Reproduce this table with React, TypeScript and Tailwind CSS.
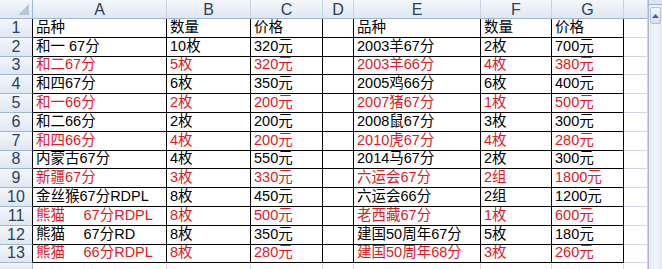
import React from 'react';

type Row = { cells: string[]; red: boolean };

const rows: Row[] = [
  { cells: ['品种', '数量', '价格', '', '品种', '数量', '价格'], red: false },
  { cells: ['和一 67分', '10枚', '320元', '', '2003羊67分', '2枚', '700元'], red: false },
  { cells: ['和二67分', '5枚', '320元', '', '2003羊66分', '4枚', '380元'], red: true },
  { cells: ['和四67分', '6枚', '350元', '', '2005鸡66分', '6枚', '400元'], red: false },
  { cells: ['和一66分', '2枚', '200元', '', '2007猪67分', '1枚', '500元'], red: true },
  { cells: ['和二66分', '2枚', '200元', '', '2008鼠67分', '3枚', '300元'], red: false },
  { cells: ['和四66分', '4枚', '200元', '', '2010虎67分', '4枚', '280元'], red: true },
  { cells: ['内蒙古67分', '4枚', '550元', '', '2014马67分', '2枚', '300元'], red: false },
  { cells: ['新疆67分', '3枚', '330元', '', '六运会67分', '2组', '1800元'], red: true },
  { cells: ['金丝猴67分RDPL', '8枚', '450元', '', '六运会66分', '2组', '1200元'], red: false },
  { cells: ['熊猫\u3000 67分RDPL', '8枚', '500元', '', '老西藏67分', '1枚', '600元'], red: true },
  { cells: ['熊猫\u3000 67分RD', '8枚', '350元', '', '建国50周年67分', '5枚', '180元'], red: false },
  { cells: ['熊猫\u3000 66分RDPL', '8枚', '280元', '', '建国50周年68分', '3枚', '260元'], red: true },
];

const cols = ['A', 'B', 'C', 'D', 'E', 'F', 'G', ''];

const headerBg = 'bg-gradient-to-b from-[#f4f7fc] to-[#dfe7f3]';

export default function App() {
  return (
    <div className="flex w-[662px] h-[269px] overflow-hidden bg-white font-['Liberation_Sans','Noto_Sans_CJK_SC',sans-serif]">
      <div className="grid flex-1 grid-cols-[33px_134px_84px_72px_31px_127px_71px_72px_24px] grid-rows-[19px_repeat(13,18.8px)_1fr]">
        {/* corner */}
        <div className={`relative ${headerBg} border-r border-b border-[#9eb6ce]`}>
          <div className="absolute right-[3px] bottom-[3px] w-0 h-0 border-l-[11px] border-l-transparent border-b-[11px] border-b-[#b7c6da]" />
        </div>
        {cols.map((c, i) => (
          <div
            key={i}
            className={`${headerBg} flex items-center justify-center border-b border-b-[#9eb6ce] border-r border-r-[#c5d3e5] text-[16px] leading-none text-[#2a3f5c] pt-[1px]`}
          >
            {c}
          </div>
        ))}

        {rows.map((r, ri) => (
          <React.Fragment key={ri}>
            <div className={`${headerBg} flex items-center justify-center border-r border-r-[#000] border-b border-b-[#9eb6ce] text-[16px] leading-none text-[#2a3f5c]`}>
              {ri + 1}
            </div>
            {r.cells.map((t, ci) => (
              <div
                key={ci}
                className={`flex items-end pl-[3px] pb-[1px] border-r border-b border-black whitespace-pre overflow-hidden text-[14.5px] leading-[17px] ${
                  r.red ? 'text-[#e01a1e]' : 'text-black'
                }`}
              >
                {t}
              </div>
            ))}
            <div className="border-r border-b border-[#d0d7e5]" />
          </React.Fragment>
        ))}

        {/* partial row 14 */}
        <div className={`${headerBg} border-r border-[#9eb6ce]`} />
        {cols.map((_, i) => (
          <div key={i} className="border-r border-[#d0d7e5]" />
        ))}
      </div>

      {/* vertical scrollbar */}
      <div className="w-[14px] h-full flex flex-col border-l border-[#a9b8cc] bg-gradient-to-r from-[#e3e9f2] via-[#f1f4f9] to-[#e3e9f2]">
        <div className="h-[5px] bg-[#dbe4f0] border-b border-[#9eb0c8]" />
        <div className="mt-[2px] mx-[1px] h-[17px] rounded-[2px] border border-[#b4c3d8] bg-gradient-to-b from-[#f3f6fb] to-[#d3deec] flex items-center justify-center">
          <svg width="7" height="4" viewBox="0 0 7 4">
            <path d="M0 4 L3.5 0 L7 4 Z" fill="#4d6185" />
          </svg>
        </div>
        <div className="flex-1" />
      </div>
    </div>
  );
}
